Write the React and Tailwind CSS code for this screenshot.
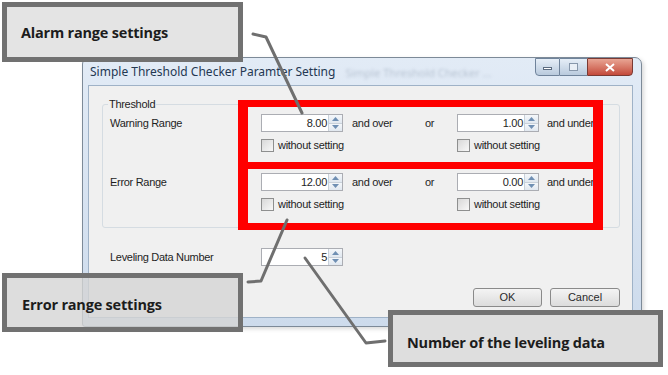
import React from 'react';

const Arrow = ({ up }) => (
  <svg width="7" height="4" viewBox="0 0 7 4">
    <path d={up ? 'M0 4 L3.5 0 L7 4Z' : 'M0 0 L3.5 4 L7 0Z'} fill="#6f8fb3" />
  </svg>
);

const Spin = ({ value }) => (
  <div className="flex h-[18px] w-[82px] border border-[#abadb3] bg-white">
    <span className="flex-1 pr-[1px] text-right leading-[16px]">{value}</span>
    <div className="flex w-[14px] flex-col border-l border-[#c9d1da]">
      <span className="flex flex-1 items-center justify-center border-b border-[#c9d1da] bg-gradient-to-b from-[#f4f7fa] to-[#e1e8f0]">
        <Arrow up />
      </span>
      <span className="flex flex-1 items-center justify-center bg-gradient-to-b from-[#f4f7fa] to-[#e1e8f0]">
        <Arrow />
      </span>
    </div>
  </div>
);

const Check = () => (
  <span className="h-[13px] w-[13px] shrink-0 border border-[#8e8f8f] bg-gradient-to-br from-[#d8d8d8] to-[#f8f8f8]" />
);

const RangeRow = ({ label, over, under }) => (
  <>
    <div className="flex h-[18px] items-center">
      <span className="w-[151px]">{label}</span>
      <Spin value={over} />
      <span className="ml-[9px] w-[73px]">and over</span>
      <span className="w-[32px]">or</span>
      <Spin value={under} />
      <span className="ml-[8px] whitespace-nowrap">and under</span>
    </div>
    <div className="mt-[7px] flex h-[13px] items-center pl-[151px]">
      <Check />
      <span className="ml-[4px] w-[179px]">without setting</span>
      <Check />
      <span className="ml-[4px]">without setting</span>
    </div>
  </>
);

const Callout = ({ className, children }) => (
  <div className={`absolute flex items-center border-[5px] border-[#717171] font-['Open_Sans',sans-serif] text-[14.5px] font-bold tracking-[-0.2px] text-[#1c1c1c] ${className}`}>
    {children}
  </div>
);

const App = () => {
  return (
    <div className="relative h-[375px] w-[668px] overflow-hidden bg-white pl-[82px] pt-[57px] font-['Liberation_Sans',sans-serif] text-[11px] tracking-[-0.3px] text-[#1e1e1e]">
      {/* dialog window */}
      <div className="flex h-[270px] w-[560px] flex-col rounded-t-[7px] rounded-b-[3px] border border-[#7d8a98] bg-gradient-to-b from-[#e2ebf6] to-[#cddbec] shadow-[2px_2px_4px_rgba(0,0,0,0.15)]">
        <div className="flex h-[27px] items-start">
          <span className="mt-[6px] pl-[7px] font-['Noto_Sans',sans-serif] text-[12px] leading-[16px] tracking-normal text-[#243852]">
            Simple Threshold Checker Paramter Setting
          </span>
          <span className="ml-[10px] mt-[7px] font-['Noto_Sans',sans-serif] text-[11px] tracking-normal text-[#8d9cae] opacity-50 blur-[1.4px]">
            Simple Threshold Checker ...
          </span>
          <div className="ml-auto mr-[8px] flex h-[18px]">
            <div className="flex w-[25px] items-center justify-center rounded-bl-[4px] border border-[#6f839b] bg-gradient-to-b from-[#e6eef7] to-[#b9cadd]">
              <span className="mt-[3px] h-[3px] w-[9px] border border-[#5b6b80] bg-white" />
            </div>
            <div className="flex w-[27px] items-center justify-center border-y border-[#6f839b] bg-gradient-to-b from-[#e6eef7] to-[#b9cadd]">
              <span className="h-[8px] w-[9px] border border-[#8797ab] bg-[#e9eff6]" />
            </div>
            <div className="flex w-[46px] items-center justify-center rounded-br-[4px] border border-[#7a3a33] bg-gradient-to-b from-[#e8a594] to-[#c3493b]">
              <svg width="10" height="9" viewBox="0 0 10 9">
                <path d="M1 1 L9 8 M9 1 L1 8" stroke="#ffffff" strokeWidth="2" />
              </svg>
            </div>
          </div>
        </div>

        <div className="mb-[8px] ml-[5px] mr-[8px] flex flex-1 flex-col border border-[#9fb2c7] bg-[#f0f0f0]">
          {/* Threshold group */}
          <div className="relative ml-[13px] mr-[12px] mt-[18px] h-[124px] rounded-[3px] border border-[#d5dce2] pl-[7px] pt-[9px]">
            <span className="absolute left-[5px] top-[-8px] bg-[#f0f0f0] px-[1px] leading-[14px]">Threshold</span>
            <RangeRow label="Warning Range" over="8.00" under="1.00" />
            <div className="mt-[21px]">
              <RangeRow label="Error Range" over="12.00" under="0.00" />
            </div>
          </div>

          <div className="ml-[21px] mt-[20px] flex h-[18px] items-center">
            <span className="w-[151px]">Leveling Data Number</span>
            <Spin value="5" />
          </div>

          <div className="mr-[12px] mt-[22px] flex justify-end gap-[8px] tracking-normal">
            <button className="h-[19px] w-[69px] rounded-[3px] border border-[#8a8a8a] bg-gradient-to-b from-[#f4f4f4] to-[#dcdcdc] text-[11px] text-[#2a2a2a]">
              OK
            </button>
            <button className="h-[19px] w-[70px] rounded-[3px] border border-[#8a8a8a] bg-gradient-to-b from-[#f4f4f4] to-[#dcdcdc] text-[11px] text-[#2a2a2a]">
              Cancel
            </button>
          </div>
        </div>
      </div>

      {/* red highlight frames */}
      <div className="absolute left-[238px] top-[100px] h-[69px] w-[365px] border-x-[10px] border-y-[7px] border-[#ff0000]" />
      <div className="absolute left-[238px] top-[162px] h-[68px] w-[365px] border-x-[10px] border-y-[7px] border-[#ff0000]" />

      {/* leader lines */}
      <svg className="absolute left-0 top-0" width="668" height="375" viewBox="0 0 668 375">
        <g fill="none" stroke="#6f6f6f" strokeWidth="3" strokeLinejoin="round" strokeLinecap="round">
          <polyline points="253,34 266,37 302,113" />
          <polyline points="248,282 261,281 287,220" />
          <polyline points="305,258 366,343 385,341" />
        </g>
      </svg>

      {/* callouts */}
      <Callout className="left-[2px] top-[2px] h-[60px] w-[241px] bg-[#e4e4e4] pl-[14px] pt-[2px]">
        Alarm range settings
      </Callout>
      <Callout className="left-[2px] top-[273px] h-[59px] w-[241px] bg-[#d4d4d4]/80 pl-[15px] pt-[4px]">
        Error range settings
      </Callout>
      <Callout className="left-[388px] top-[310px] h-[57px] w-[275px] bg-[#dedede] pl-[14px] pt-[8px]">
        Number of the leveling data
      </Callout>
    </div>
  );
};

export default App;
